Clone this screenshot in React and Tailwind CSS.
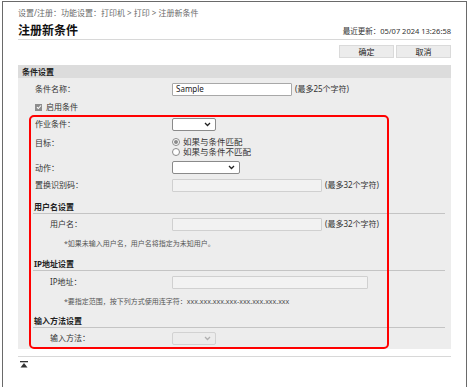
import React from 'react';

// Settings page: "注册新条件" form with a red annotation frame
const Chevron = ({ disabled }) => (
    <svg width="7" height="5" viewBox="0 0 7 5" className="shrink-0">
        <path d="M1 1l2.5 2.5L6 1" fill="none" stroke={disabled ? '#b0b0b0' : '#222'} strokeWidth="1.3" />
    </svg>
);

function Select({ w, disabled }) {
    return (
        <div
            className={`${w} h-[13px] flex items-center justify-end pr-[4px] rounded-[2px] border ${
                disabled ? 'bg-[#ececec] border-[#d2d2d2]' : 'bg-white border-[#8a8a8a]'
            }`}
        >
            <Chevron disabled={disabled} />
        </div>
    );
}

function TextInput({ w, value, disabled }) {
    return (
        <div
            className={`${w} h-[13px] flex items-center px-[3px] rounded-[1px] border text-[8px] text-[#222] ${
                disabled ? 'bg-[#f2f2f2] border-[#d0d0d0]' : 'bg-white border-[#a8a8a8]'
            }`}
        >
            {value}
        </div>
    );
}

function Row({ label, h, sub, children, top }) {
    return (
        <div className={`flex ${top ? 'items-start pt-[4px]' : 'items-center'} ${h} ${sub ? 'pl-[32px]' : 'pl-[17px]'}`}>
            <div className={`${sub ? 'w-[122px]' : 'w-[137px]'} text-[8px] leading-[10px] text-[#333]`}>{label}</div>
            {children}
        </div>
    );
}

function SubHeader({ title, pt }) {
    return (
        <div className={`${pt} ml-[15px] mr-[6px] pb-[1px] border-b border-[#c4c4c4]`}>
            <div className="pl-[1px] text-[8px] leading-[10px] font-bold text-[#222]">{title}</div>
        </div>
    );
}

const Limit = ({ text }) => <span className="ml-[3px] text-[8px] leading-[10px] text-[#333]">{text}</span>;

function Radio({ checked, label }) {
    return (
        <div className="flex items-center h-[10px] gap-[3px]">
            <div className="w-[8px] h-[8px] rounded-full border border-[#8a8a8a] bg-white flex items-center justify-center">
                {checked && <div className="w-[4px] h-[4px] rounded-full bg-[#8a8a8a]" />}
            </div>
            <span className="text-[8.5px] leading-[10px] text-[#333]">{label}</span>
        </div>
    );
}

export default function App() {
    return (
        <div className="w-[469px] h-[387px] bg-white overflow-hidden font-['Noto_Sans','Noto_Sans_CJK_SC',sans-serif]">
            <div className="ml-[2px] mt-[1px] w-[465px] h-[386px] border-l border-t border-r border-[#6a6a6a] pl-[15px] pr-[15px]">
                {/* Breadcrumb */}
                <div className="pt-[6px] text-[8px] leading-[10px] text-[#6a6a6a]">
                    设置/注册：功能设置：打印机 &gt; 打印 &gt; 注册新条件
                </div>

                {/* Title */}
                <div className="mt-[5px] flex items-end justify-between border-b border-[#d8d8d8] pb-[1px]">
                    <h1 className="text-[12px] leading-[15px] font-bold text-[#111]">注册新条件</h1>
                    <span className="text-[7.5px] leading-[10px] text-[#333] mb-[2px]">最近更新：05/07 2024 13:26:58</span>
                </div>

                {/* Buttons */}
                <div className="mt-[5px] flex justify-end gap-[2px]">
                    <button className="w-[55px] h-[13px] bg-[#ececec] border border-[#dadada] text-[8px] leading-[10px] text-[#222]">确定</button>
                    <button className="w-[55px] h-[13px] bg-[#ececec] border border-[#dadada] text-[8px] leading-[10px] text-[#222]">取消</button>
                </div>

                {/* Condition settings */}
                <div className="relative mt-[7px] bg-[#ededed] pb-[1px]">
                    <div className="h-[13px] bg-[#dcdcdc] pl-[4px] flex items-center text-[8px] font-bold text-[#222]">条件设置</div>

                    <Row label="条件名称：" h="h-[22px]">
                        <TextInput w="w-[120px]" value="Sample" />
                        <Limit text="(最多25个字符)" />
                    </Row>

                    <div className="h-[14px] pl-[17px] flex items-center gap-[4px]">
                        <div className="w-[7px] h-[7px] bg-[#8c8c8c] flex items-center justify-center">
                            <svg width="6" height="6" viewBox="0 0 6 6">
                                <path d="M1 3.2l1.3 1.3L5 1.5" fill="none" stroke="#fff" strokeWidth="1.1" />
                            </svg>
                        </div>
                        <span className="text-[8px] leading-[10px] text-[#333]">启用条件</span>
                    </div>

                    <Row label="作业条件：" h="h-[20px]">
                        <Select w="w-[44px]" />
                    </Row>

                    <Row label="目标：" h="h-[23px]" top>
                        <div className="flex flex-col -mt-[1px]">
                            <Radio checked label="如果与条件匹配" />
                            <Radio label="如果与条件不匹配" />
                        </div>
                    </Row>

                    <Row label="动作：" h="h-[21px]">
                        <Select w="w-[68px]" />
                    </Row>

                    <Row label="置换识别码：" h="h-[14px]">
                        <TextInput w="w-[150px]" disabled />
                        <Limit text="(最多32个字符)" />
                    </Row>

                    <SubHeader title="用户名设置" pt="pt-[10px]" />
                    <Row label="用户名：" h="h-[20px]" sub>
                        <TextInput w="w-[150px]" disabled />
                        <Limit text="(最多32个字符)" />
                    </Row>
                    <div className="h-[20px] pl-[46px] flex items-center text-[7px] text-[#555]">
                        *如果未输入用户名，用户名将指定为未知用户。
                    </div>

                    <SubHeader title="IP地址设置" pt="pt-[5px]" />
                    <Row label="IP地址：" h="h-[22px]" sub>
                        <TextInput w="w-[196px]" disabled />
                    </Row>
                    <div className="h-[18px] pl-[46px] flex items-center text-[7px] text-[#555]">
                        *要指定范围，按下列方式使用连字符：xxx.xxx.xxx.xxx-xxx.xxx.xxx.xxx
                    </div>

                    <SubHeader title="输入方法设置" pt="pt-[5px]" />
                    <Row label="输入方法：" h="h-[20px]" sub>
                        <Select w="w-[44px]" disabled />
                    </Row>

                    {/* annotation frame */}
                    <div className="absolute left-[11px] top-[50px] w-[360px] h-[234px] border-2 border-[#ff0000] rounded-[5px] pointer-events-none" />
                </div>

                <div className="mt-[7px] border-t border-[#d8d8d8] pt-[4px] pl-[2px]">
                    <svg width="8" height="7" viewBox="0 0 8 7">
                        <rect x="0" y="0" width="8" height="1.3" fill="#333" />
                        <path d="M4 2L7.5 6.5H0.5Z" fill="#333" />
                    </svg>
                </div>
            </div>
        </div>
    );
}
